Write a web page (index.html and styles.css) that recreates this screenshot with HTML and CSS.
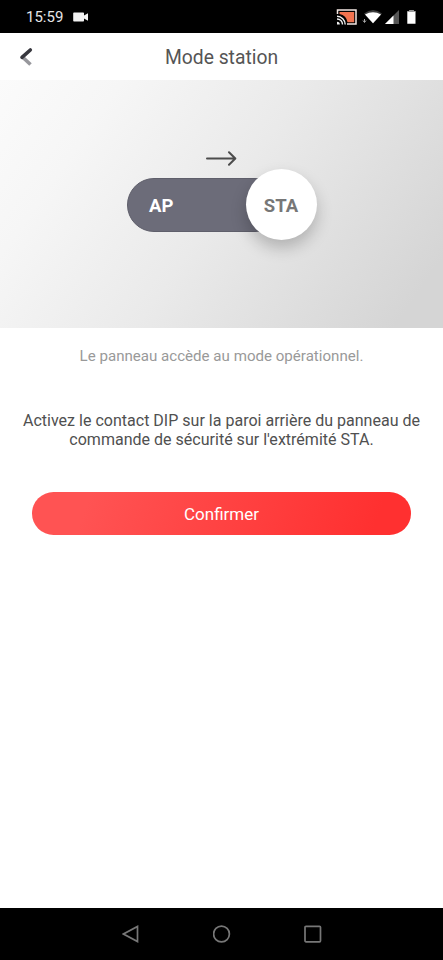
FILE: index.html
```html
<!DOCTYPE html>
<html lang="fr">
<head>
<meta charset="utf-8">
<title>Mode station</title>
<link rel="stylesheet" href="styles.css">
</head>
<body>
<div class="screen">
  <div class="statusbar">
    <div class="status-left">
      <span class="clock">15:59</span>
      <svg width="16" height="10" viewBox="0 0 16 10"><path fill="#f2f2f2" d="M1 .5h9.2q.8 0 .8.8v2.2L15 1.200v7.600L11 6.500v2.200q0 .8-.8.8H1q-.8 0-.8-.8V1.300Q.2.500 1 .5z"/></svg>
    </div>
    <svg class="status-icons" width="84" height="20" viewBox="0 0 84 20">
      <path d="M2.500 7V3H21V17H12" fill="none" stroke="#f4e8e4" stroke-width="1.500"/>
      <path d="M4.500 5H19.200V15.300H12.500Q11.500 8.500 4.500 7z" fill="#f2734f"/>
      <g fill="none" stroke="#f0f0f0" stroke-width="1.400"><path d="M2 9.200A8.300 8.300 0 0 1 10.200 17.500M2 12A5.500 5.500 0 0 1 7.500 17.500"/></g>
      <path d="M2 14.700A2.800 2.800 0 0 1 4.800 17.500H2z" fill="#f0f0f0"/>
      <path d="M29 6.500Q38 -.5 47 6.500L38 16.500z" fill="#3c3c3c"/>
      <path d="M30 7.500Q38 3 46 7.500L38 16.300z" fill="#fff"/>
      <path d="M29.500 12v3m-1.500-1.500 1.500 2 1.500-2" fill="none" stroke="#aaa"/>
      <path d="M50 17 64 3V17z" fill="#555"/><path d="M50 17 58.500 8.500V17z" fill="#fff"/>
      <path d="M74.500 3h4v1.300h2V16.800H72.300V4.300H74.500z" fill="#fff"/><path d="M74.500 3h4v1.300h2V5h-8.200V4.300H74.500z" fill="#999"/>
    </svg>
  </div>
  <header class="header">
    <svg class="back" width="16" height="24" viewBox="0 0 16 24"><path d="M4.500 13 11.500 19.500" stroke="#97979c" stroke-width="3.600"/><path d="M11.300 5 3 12.300" stroke="#38383f" stroke-width="3.600" stroke-linecap="round"/></svg>
    <h1>Mode station</h1>
  </header>
  <section class="hero">
    <svg class="arrow" width="32" height="16" viewBox="0 0 32 16" fill="none" stroke="#4c4c4c" stroke-width="2" stroke-linecap="round" stroke-linejoin="round"><path d="M1 8.500H29M23 2.200 29.300 8.500 23 14.800"/></svg>
    <div class="toggle">
      <div class="track">AP</div>
      <div class="knob">STA</div>
    </div>
  </section>
  <main class="content">
    <p class="status">Le panneau accède au mode opérationnel.</p>
    <p class="instruction">Activez le contact DIP sur la paroi arrière du panneau de<br>commande de sécurité sur l'extrémité STA.</p>
    <button class="confirm">Confirmer</button>
  </main>
  <nav class="navbar">
    <svg width="18" height="18" viewBox="0 0 18 18"><path d="M15.500 1.500V16.500L1.500 9z"/></svg>
    <svg width="18" height="18" viewBox="0 0 18 18"><circle cx="8.500" cy="9" r="7.900"/></svg>
    <svg width="18" height="18" viewBox="0 0 18 18"><rect x="1" y="1.300" width="15.500" height="15.500" rx="1"/></svg>
  </nav>
</div>
</body>
</html>
```
FILE: styles.css
```css
* { box-sizing: border-box; }
body, h1, p { margin: 0; }
body {
  font-family: Roboto, "Liberation Sans", sans-serif;
  background: #fff;
}
svg { display: block; flex: none; }
.screen {
  width: 443px;
  height: 960px;
  display: flex;
  flex-direction: column;
  overflow: hidden;
}
.statusbar {
  height: 33px;
  flex: none;
  background: #000;
  display: flex;
  justify-content: space-between;
  padding: 0 24px 0 26px;
}
.status-left {
  height: 33px;
  display: flex;
  align-items: center;
  gap: 10px;
}
.clock {
  color: #e6e6e6;
  font-size: 15px;
  line-height: 33px;
  padding-top: 1px;
}
.status-icons { margin-top: 7px; }
.header {
  height: 47px;
  flex: none;
  display: grid;
  grid-template-columns: 40px 1fr 40px;
  align-items: center;
}
.back {
  margin-left: 19px;
  fill: none;
}
.header h1 {
  padding-top: 2px;
  font-size: 19.300px;
  font-weight: 400;
  line-height: 24px;
  color: #555;
  text-align: center;
  white-space: nowrap;
}
.hero {
  height: 248px;
  flex: none;
  padding-top: 70px;
  display: flex;
  flex-direction: column;
  align-items: center;
  background: linear-gradient(125deg, #fbfbfb 0%, #f6f6f6 20%, #eaeaea 50%, #d5d5d5 92%);
}
.toggle {
  width: 190px;
  height: 71px;
  margin-top: 3px;
  display: flex;
  align-items: center;
}
.track {
  width: 155px;
  height: 54px;
  flex: none;
  padding-left: 21.500px;
  border: 1px solid #5f5f6b;
  border-radius: 27px;
  background: #6c6c79;
  color: #fff;
  font-size: 18.500px;
  font-weight: 700;
  line-height: 54px;
}
.knob {
  width: 71px;
  height: 71px;
  flex: none;
  margin-left: -36px;
  border-radius: 50%;
  background: #fff;
  box-shadow: 0 8px 16px rgba(0, 0, 0, 0.220);
  color: #777;
  font-size: 18.500px;
  font-weight: 700;
  line-height: 74px;
  text-align: center;
}
.content {
  flex: 1;
  display: flex;
  flex-direction: column;
  align-items: center;
  text-align: center;
}
.status {
  margin-top: 18px;
  font-size: 15.100px;
  line-height: 20px;
  color: #999;
}
.instruction {
  margin-top: 45px;
  font-size: 16.050px;
  line-height: 19px;
  color: #505050;
  white-space: nowrap;
}
.confirm {
  width: 379px;
  height: 43px;
  margin-top: 43px;
  padding: 0;
  border: 0;
  border-radius: 22px;
  background: linear-gradient(110deg, #ff5353 15%, #ff3030 90%);
  color: #fff;
  font-family: inherit;
  font-size: 17px;
}
.navbar {
  height: 52px;
  flex: none;
  background: #000;
  display: flex;
  justify-content: center;
  align-items: center;
  gap: 73px;
}
.navbar svg {
  fill: none;
  stroke: #777;
  stroke-width: 1.700;
}
```
